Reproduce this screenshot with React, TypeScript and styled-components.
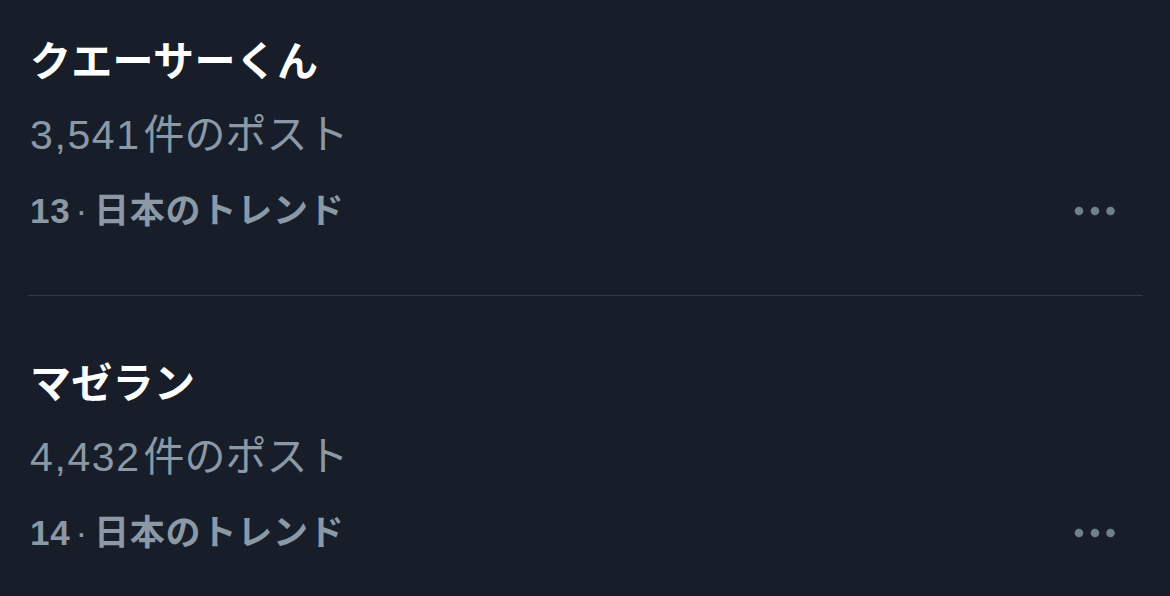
import React from "react";
import styled, { createGlobalStyle } from "styled-components";

const GlobalStyle = createGlobalStyle`
  html, body {
    margin: 0;
    padding: 0;
    background: #171e29;
  }
  body {
    font-family: "Liberation Sans", "Noto Sans CJK JP", sans-serif;
    -webkit-font-smoothing: antialiased;
  }
`;

type Trend = {
  title: string;
  count: string;
  rank: number;
};

const trends: Trend[] = [
  { title: "クエーサーくん", count: "3,541", rank: 13 },
  { title: "マゼラン", count: "4,432", rank: 14 },
];

const App = () => {
  return (
    <>
      <GlobalStyle />
      <Page>
        <List>
          {trends.map((t, i) => (
            <Item key={t.rank} first={i === 0}>
              <Title>{t.title}</Title>
              <Count>
                <Num>{t.count}</Num>件のポスト
              </Count>
              <MetaRow>
                <Meta>
                  {t.rank}
                  <Dot>·</Dot>日本のトレンド
                </Meta>
                <More aria-label="more">
                  <svg width="42" height="10" viewBox="0 0 42 10">
                    <circle cx="5" cy="5" r="4.3" fill="#717e8b" />
                    <circle cx="21" cy="5" r="4.3" fill="#717e8b" />
                    <circle cx="36.5" cy="5" r="4.3" fill="#717e8b" />
                  </svg>
                </More>
              </MetaRow>
            </Item>
          ))}
        </List>
      </Page>
    </>
  );
};

export default App;

const Page = styled.div`
  width: 1170px;
  height: 596px;
  overflow: hidden;
  background: #171e29;
`;

const List = styled.div`
  display: flex;
  flex-direction: column;
  padding: 0 27px 0 28px;
`;

const Item = styled.div<{ first: boolean }>`
  display: flex;
  flex-direction: column;
  padding: ${(p) => (p.first ? "20px" : "46px")} 0 47px 2px;
  border-bottom: 1px solid #323c47;

  &:last-child {
    border-bottom: none;
  }
`;

const Title = styled.div`
  color: #ffffff;
  font-family: "Noto Sans CJK JP", sans-serif;
  font-size: 41px;
  font-weight: 700;
  line-height: 76px;
  letter-spacing: 0.3px;
`;

const Count = styled.div`
  color: #8b98a5;
  font-size: 41px;
  font-weight: 400;
  line-height: 78px;
`;

const Num = styled.span`
  letter-spacing: 1.6px;
  margin-right: 3px;
`;

const MetaRow = styled.div`
  display: flex;
  justify-content: space-between;
  align-items: center;
  height: 74px;
  padding-right: 27px;
`;

const Meta = styled.div`
  color: #8b98a5;
  font-size: 35px;
  font-weight: 700;
  line-height: 74px;
  letter-spacing: 0.8px;
`;

const Dot = styled.span`
  font-weight: 400;
  margin: 0 6px 0 5px;
`;

const More = styled.div`
  display: flex;
  align-items: center;
`;
